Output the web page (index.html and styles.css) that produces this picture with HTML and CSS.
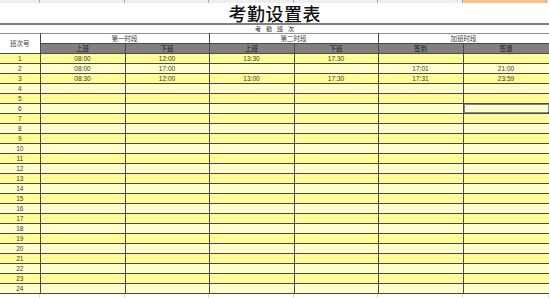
FILE: index.html
```html
<!DOCTYPE html>
<html>
<head>
<meta charset="utf-8">
<link rel="stylesheet" href="styles.css">
</head>
<body>
<div class="colhead">
  <span class="ch w40"></span><span class="ch w85"></span><span class="ch w84"></span><span class="ch w85"></span><span class="ch w84"></span><span class="ch w85"></span><span class="ch sel"></span>
</div>
<div class="title"><span class="title-text">考勤设置表</span></div>
<div class="thick"></div>
<div class="caption"><span class="caption-text">考勤班次</span></div>
<table class="sheet">
  <colgroup>
    <col class="c0"><col class="c1"><col class="c2"><col class="c1"><col class="c2"><col class="c1"><col class="c3">
  </colgroup>
  <tr class="h1">
    <td rowspan="2" class="num-head">班次号</td>
    <td colspan="2">第一时段</td>
    <td colspan="2">第二时段</td>
    <td colspan="2" class="last">加班时段</td>
  </tr>
  <tr class="h2">
    <td>上班</td><td>下班</td><td>上班</td><td>下班</td><td>签到</td><td>签退</td>
  </tr>
  <tr class="odd"><td>1</td><td>08:00</td><td>12:00</td><td>13:30</td><td>17:30</td><td></td><td></td></tr>
  <tr class="even"><td>2</td><td>08:00</td><td>17:00</td><td></td><td></td><td>17:01</td><td>21:00</td></tr>
  <tr class="odd"><td>3</td><td>08:30</td><td>12:00</td><td>13:00</td><td>17:30</td><td>17:31</td><td>23:59</td></tr>
  <tr class="even"><td>4</td><td></td><td></td><td></td><td></td><td></td><td></td></tr>
  <tr class="odd"><td>5</td><td></td><td></td><td></td><td></td><td></td><td></td></tr>
  <tr class="even"><td>6</td><td></td><td></td><td></td><td></td><td></td><td class="active"><span class="handle"></span></td></tr>
  <tr class="odd"><td>7</td><td></td><td></td><td></td><td></td><td></td><td></td></tr>
  <tr class="even"><td>8</td><td></td><td></td><td></td><td></td><td></td><td></td></tr>
  <tr class="odd"><td>9</td><td></td><td></td><td></td><td></td><td></td><td></td></tr>
  <tr class="even"><td>10</td><td></td><td></td><td></td><td></td><td></td><td></td></tr>
  <tr class="odd"><td>11</td><td></td><td></td><td></td><td></td><td></td><td></td></tr>
  <tr class="even"><td>12</td><td></td><td></td><td></td><td></td><td></td><td></td></tr>
  <tr class="odd"><td>13</td><td></td><td></td><td></td><td></td><td></td><td></td></tr>
  <tr class="even"><td>14</td><td></td><td></td><td></td><td></td><td></td><td></td></tr>
  <tr class="odd"><td>15</td><td></td><td></td><td></td><td></td><td></td><td></td></tr>
  <tr class="even"><td>16</td><td></td><td></td><td></td><td></td><td></td><td></td></tr>
  <tr class="odd"><td>17</td><td></td><td></td><td></td><td></td><td></td><td></td></tr>
  <tr class="even"><td>18</td><td></td><td></td><td></td><td></td><td></td><td></td></tr>
  <tr class="odd"><td>19</td><td></td><td></td><td></td><td></td><td></td><td></td></tr>
  <tr class="even"><td>20</td><td></td><td></td><td></td><td></td><td></td><td></td></tr>
  <tr class="odd"><td>21</td><td></td><td></td><td></td><td></td><td></td><td></td></tr>
  <tr class="even"><td>22</td><td></td><td></td><td></td><td></td><td></td><td></td></tr>
  <tr class="odd"><td>23</td><td></td><td></td><td></td><td></td><td></td><td></td></tr>
  <tr class="even"><td>24</td><td></td><td></td><td></td><td></td><td></td><td></td></tr>
</table>
<div class="tail">
  <span class="tl w40"></span><span class="tl w85"></span><span class="tl w84"></span><span class="tl w85"></span><span class="tl w84"></span><span class="tl w85"></span><span class="tl w86"></span>
</div>
</body>
</html>
```
FILE: styles.css
```css
html, body {
  margin: 0;
  padding: 0;
  background: #ffffff;
  overflow: hidden;
}
body {
  width: 549px;
  height: 298px;
  font-family: "Liberation Sans", "Noto Sans CJK SC", sans-serif;
  color: #333333;
}
.colhead {
  display: flex;
  height: 3px;
  background: #eeeeee;
}
.ch {
  height: 3px;
  box-sizing: border-box;
  border-right: 1px solid #a8a8a8;
}
.w40 { width: 40px; }
.w85 { width: 85px; }
.w84 { width: 84px; }
.w86 { width: 86px; }
.ch.sel {
  width: 84px;
  background: #f7c58c;
}
.title {
  height: 20px;
  display: flex;
  align-items: center;
  justify-content: center;
}
.title-text {
  font-family: "Noto Sans CJK SC", sans-serif;
  font-size: 18px;
  line-height: 20px;
  font-weight: 500;
  color: #111111;
  letter-spacing: 0.5px;
  padding-left: 0.5px;
}
.thick {
  height: 2px;
  background: #7f7f7f;
}
.caption {
  height: 8px;
  display: flex;
  align-items: center;
  justify-content: center;
}
.caption-text {
  font-family: "Noto Sans CJK SC", sans-serif;
  font-size: 6px;
  line-height: 8px;
  letter-spacing: 5px;
  padding-left: 5px;
  color: #222222;
}
.sheet {
  border-collapse: collapse;
  table-layout: fixed;
  width: 549px;
}
.c0 { width: 40px; }
.c1 { width: 85px; }
.c2 { width: 84px; }
.c3 { width: 86px; }
.sheet td {
  padding: 0;
  height: 9px;
  border: 1px solid #4a4a40;
  text-align: center;
  vertical-align: middle;
  font-size: 6.5px;
  line-height: 9px;
  overflow: hidden;
  white-space: nowrap;
  color: #3a3a3a;
  font-family: "Liberation Sans", "Noto Sans CJK SC", sans-serif;
}
.sheet tr td:first-child {
  border-left: 0;
}
.sheet .h1 td {
  border-top: 1px solid #909090;
  background: #ffffff;
  font-family: "Noto Sans CJK SC", sans-serif;
  font-size: 6.5px;
}
.sheet .h1 td.num-head {
  border-left: 0;
}
.sheet .h2 td {
  background: #808080;
  color: #1a1a1a;
  font-family: "Noto Sans CJK SC", sans-serif;
  font-size: 6.5px;
}
.sheet .odd td { background: #fffb96; }
.sheet .even td { background: #ffffcc; }
.sheet td.active {
  position: relative;
}
.sheet td.active::after {
  content: "";
  position: absolute;
  left: -1px;
  top: -1px;
  right: -1px;
  bottom: -1px;
  border: 2px solid #8585a0;
}
.handle {
  position: absolute;
  right: -2px;
  bottom: -2px;
  width: 3px;
  height: 3px;
  background: #222222;
  z-index: 2;
}
.tail {
  display: flex;
  height: 6px;
}
.tl {
  height: 6px;
  box-sizing: border-box;
  border-right: 1px solid #dcdcdc;
}
```
